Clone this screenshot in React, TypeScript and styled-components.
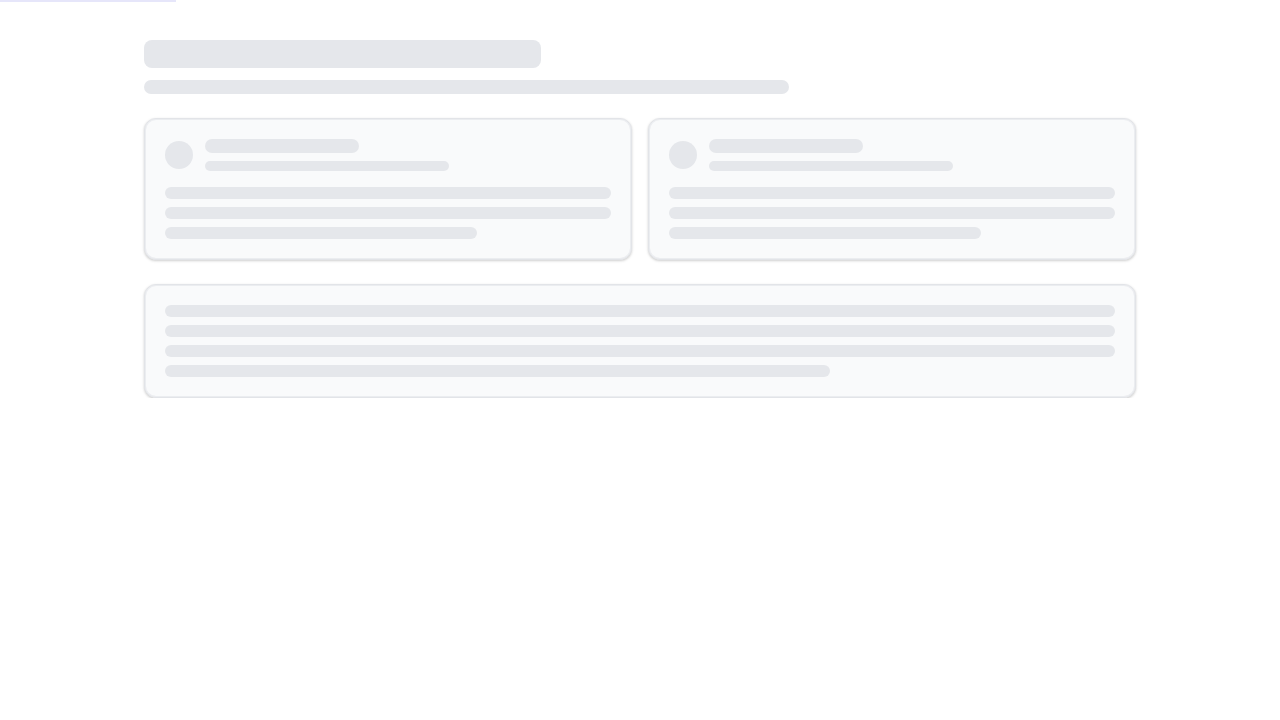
import React from 'react';
import styled, { createGlobalStyle } from 'styled-components';

const GlobalStyle = createGlobalStyle`
  html, body {
    margin: 0;
    padding: 0;
    background: #ffffff;
    font-family: Inter, "Liberation Sans", sans-serif;
  }
  * {
    box-sizing: border-box;
  }
`;

const ProgressTrack = styled.div`
  position: fixed;
  top: 0;
  left: 0;
  right: 0;
  height: 2px;
  pointer-events: none;
`;

const ProgressFill = styled.div`
  height: 100%;
  background: #e6e6fa;
`;

const Page = styled.main`
  width: 992px;
  margin: 0 auto;
  padding-top: 40px;
  display: flex;
  flex-direction: column;
`;

const Bone = styled.div<{ $w?: string; $h: number; $r?: number }>`
  width: ${(p) => p.$w ?? '100%'};
  height: ${(p) => p.$h}px;
  border-radius: ${(p) => (p.$r !== undefined ? `${p.$r}px` : '9999px')};
  background: #e5e7eb;
  flex-shrink: 0;
`;

const Header = styled.header`
  display: flex;
  flex-direction: column;
  gap: 12px;
  margin-bottom: 24px;
`;

const CardGrid = styled.section`
  display: grid;
  grid-template-columns: 1fr 1fr;
  gap: 16px;
  margin-bottom: 24px;
`;

const Card = styled.div`
  background: #f9fafb;
  border: 1px solid #e2e4e8;
  border-radius: 12px;
  padding: 20px;
  box-shadow: inset 0 0 0 1px rgba(229, 231, 235, 0.7), 0 1px 3px rgba(0, 0, 0, 0.14),
    0 1px 2px rgba(0, 0, 0, 0.06);
  display: flex;
  flex-direction: column;
  gap: 16px;
`;

const CardHead = styled.div`
  display: flex;
  align-items: center;
  gap: 12px;
`;

const Avatar = styled.div`
  width: 28px;
  height: 28px;
  border-radius: 50%;
  background: #e5e7eb;
  flex-shrink: 0;
`;

const HeadText = styled.div`
  flex: 1;
  display: flex;
  flex-direction: column;
  gap: 8px;
`;

const Lines = styled.div`
  display: flex;
  flex-direction: column;
  gap: 8px;
`;

const ProfileCard = () => (
  <Card>
    <CardHead>
      <Avatar />
      <HeadText>
        <Bone $w="38%" $h={14} />
        <Bone $w="60%" $h={10} />
      </HeadText>
    </CardHead>
    <Lines>
      <Bone $h={12} />
      <Bone $h={12} />
      <Bone $w="70%" $h={12} />
    </Lines>
  </Card>
);

const App = () => (
  <>
    <GlobalStyle />
    <ProgressTrack>
      <ProgressFill style={{ width: '176px' }} />
    </ProgressTrack>
    <Page>
      <Header>
        <Bone $w="40%" $h={28} $r={8} />
        <Bone $w="65%" $h={14} />
      </Header>
      <CardGrid>
        <ProfileCard />
        <ProfileCard />
      </CardGrid>
      <Card>
        <Lines>
          <Bone $h={12} />
          <Bone $h={12} />
          <Bone $h={12} />
          <Bone $w="70%" $h={12} />
        </Lines>
      </Card>
    </Page>
  </>
);

export default App;
